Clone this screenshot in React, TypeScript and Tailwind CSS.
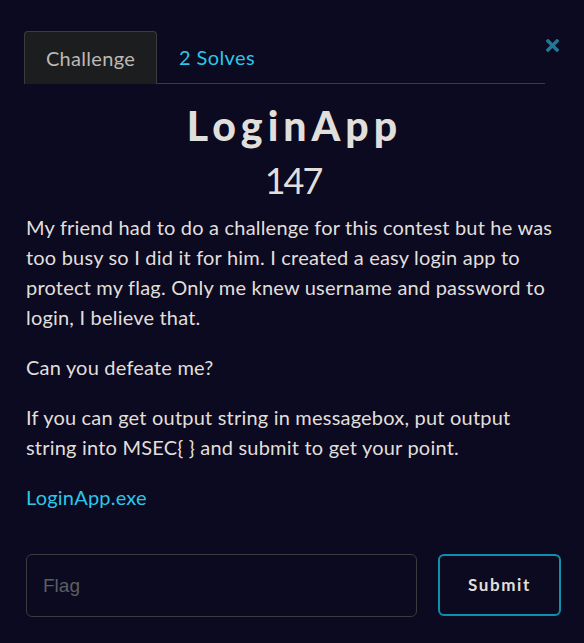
import React from "react";

const p3 = "If you can get output string in messagebox, put output string into MSEC{ } and submit to get your point.";

export default function App() {
  return (
    <div
      className="relative w-[584px] h-[643px] overflow-hidden bg-[#0b0a20] px-[26px] text-[#e1dfdb]"
      style={{ fontFamily: "Lato, 'Open Sans', sans-serif" }}
    >
      <button className="absolute top-[39px] left-[546px] text-[#1f7896]">
        <svg width="13" height="13" viewBox="0 0 13 13">
          <path d="M2 2 L11 11 M11 2 L2 11" stroke="#1f7896" strokeWidth="3.4" strokeLinecap="square" />
        </svg>
      </button>
      <div className="pt-[31px]">
        <div className="-ml-[2px] flex w-[521px] border-b border-[#3b3b42]">
          <div className="-mb-px flex h-[53px] w-[133px] items-center justify-center rounded-t-[4px] border border-b-0 border-[#3b3b40] bg-[#1c1d1f] text-[20px] tracking-[0.3px] text-[#bcb9b4]">
            Challenge
          </div>
          <div className="flex h-[52px] items-center px-[22px] text-[20px] tracking-[0.4px] text-[#2bc6e8]">
            2 Solves
          </div>
        </div>
      </div>
      <h1 className="mt-[18px] pl-[5px] text-center text-[41px] font-black leading-[48px] tracking-[5px] text-[#e1dfdb]">
        LoginApp
      </h1>
      <div className="mt-[8px] pl-[2px] text-center text-[36px] leading-[44px] tracking-[-2px]">147</div>
      <div className="mt-[10px] text-[20px] leading-[30px] tracking-[0.2px]">
        <p>
          My friend had to do a challenge for this contest but he was too busy so I did it for him. I created a easy
          login app to protect my flag. Only me knew username and password to login, I believe that.
        </p>
        <p className="mt-[20px]">Can you defeate me?</p>
        <p className="mt-[20px]">{p3}</p>
        <p className="mt-[20px]">
          <a className="text-[#2bc6e8]">LoginApp.exe</a>
        </p>
      </div>
      <div className="mt-[42px] flex items-start gap-[21px]">
        <input
          placeholder="Flag"
          className="h-[63px] w-[391px] shrink-0 rounded-[6px] border border-[#3a3a3f] bg-transparent px-[16px] text-[19px] text-white placeholder:text-[#5e5d63] outline-none"
          style={{ fontFamily: "'Liberation Sans', Arial, sans-serif" }}
        />
        <button className="h-[62px] w-[123px] shrink-0 rounded-[6px] border-2 border-[#0e8fae] text-[17px] font-bold tracking-[1.6px] text-[#e1dfdb]">
          Submit
        </button>
      </div>
    </div>
  );
}
